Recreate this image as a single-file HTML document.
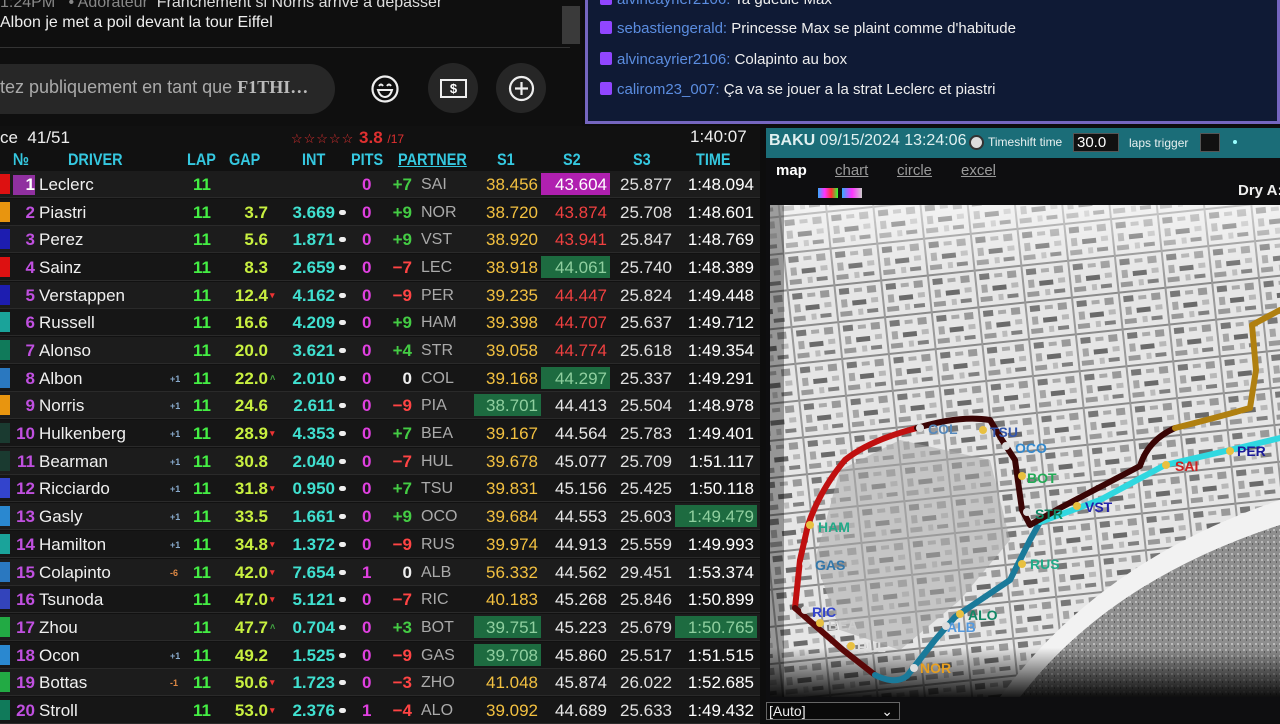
<!DOCTYPE html>
<html><head><meta charset="utf-8"><style>
*{margin:0;padding:0;box-sizing:border-box}
body{width:1280px;height:720px;overflow:hidden;background:#0d0d0d;font-family:"Liberation Sans",sans-serif;position:relative;color:#fff}
.abs{position:absolute;white-space:nowrap}
#yt{left:0;top:0;width:582px;height:126px;background:#0f0f0f}
#tw{left:585px;top:0;width:695px;height:124px;background:#0f1a35;border:3px solid #7566c0;border-top:none}
.tl{font-size:15px;color:#eee;left:12px}
.tl .ic{display:inline-block;width:12px;height:13px;background:#9146ff;border-radius:2px;margin-right:5px;vertical-align:-1px}
.tl b{font-weight:normal;color:#5b8de0}
#tbl{left:0;top:126px;width:760px;height:594px;background:#111}
.row{position:absolute;left:0;width:760px;height:27px;font-size:17px;font-weight:bold}
.row>span{position:absolute;top:4px}
.hd{position:absolute;top:150px;font-size:17px;font-weight:bold;color:#35c8e0;transform:scaleX(.85);transform-origin:left}
#mp{left:766px;top:126px;width:514px;height:594px;background:#0e0e10}
</style></head><body>

<div id="yt" class="abs">
<div class="abs" style="left:0;top:-6px;font-size:16px;color:#ddd"><span style="color:#888">1:24PM &nbsp; • Adorateur</span> &nbsp;Franchement si Norris arrive a depasser</div>
<div class="abs" style="left:0;top:14px;font-size:16px;color:#eee">Albon je met a poil devant la tour Eiffel</div>
<div class="abs" style="left:562px;top:6px;width:18px;height:38px;background:#3a3a3a"></div>
<div class="abs" style="left:0;top:47px;width:570px;height:1px;background:#333"></div>
<div class="abs" style="left:-30px;top:64px;width:365px;height:50px;border-radius:25px;background:#272727"></div>
<div class="abs" style="left:0;top:77px;font-size:18px;color:#aaa">tez publiquement en tant que <span style="font-family:'Liberation Serif',serif;font-weight:bold;color:#bbb">F1THI…</span></div>
<svg class="abs" style="left:369px;top:73px" width="32" height="32" viewBox="0 0 32 32"><circle cx="16" cy="16" r="12.5" fill="none" stroke="#eee" stroke-width="2.2"/><path d="M10 13q2-3 4 0M18 13q2-3 4 0" fill="none" stroke="#eee" stroke-width="2"/><path d="M9 17h14q-2 7-7 7t-7-7z" fill="none" stroke="#eee" stroke-width="2"/></svg>
<div class="abs" style="left:428px;top:63px;width:50px;height:50px;border-radius:25px;background:#262626"></div>
<div class="abs" style="left:440px;top:79px;width:27px;height:19px;border:2.2px solid #eee;font-size:13px;font-weight:bold;text-align:center;line-height:15px">$</div>
<div class="abs" style="left:496px;top:63px;width:50px;height:50px;border-radius:25px;background:#262626"></div>
<svg class="abs" style="left:508px;top:75px" width="27" height="27" viewBox="0 0 27 27"><circle cx="13.5" cy="13.5" r="11.5" fill="none" stroke="#eee" stroke-width="2.2"/><path d="M13.5 7v13M7 13.5h13" stroke="#eee" stroke-width="2.2"/></svg>
</div>

<div id="tw" class="abs">
<div class="abs tl" style="top:-9px"><span class="ic"></span><b>alvincayrier2106:</b> Ta gueule Max</div>
<div class="abs tl" style="top:20px"><span class="ic"></span><b>sebastiengerald:</b> Princesse Max se plaint comme d'habitude</div>
<div class="abs tl" style="top:51px"><span class="ic"></span><b>alvincayrier2106:</b> Colapinto au box</div>
<div class="abs tl" style="top:81px"><span class="ic"></span><b>calirom23_007:</b> Ça va se jouer a la strat Leclerc et piastri</div>
</div>

<div id="tbl" class="abs"></div>
<div class="abs" style="left:0;top:128px;font-size:17px;color:#eee">ce &nbsp;41/51</div>
<div class="abs" style="left:291px;top:128px;font-size:17px;color:#e03030"><span style="font-size:13px;letter-spacing:1px">☆☆☆☆☆</span> <b>3.8</b> <span style="font-size:12px">/17</span></div>
<div class="abs" style="left:690px;top:127px;font-size:17px;color:#eee">1:40:07</div>
<div class="hd" style="left:13px">№</div>
<div class="hd" style="left:68px">DRIVER</div>
<div class="hd" style="left:187px">LAP</div>
<div class="hd" style="left:229px">GAP</div>
<div class="hd" style="left:302px">INT</div>
<div class="hd" style="left:351px">PITS</div>
<div class="hd" style="left:398px;text-decoration:underline">PARTNER</div>
<div class="hd" style="left:497px">S1</div>
<div class="hd" style="left:563px">S2</div>
<div class="hd" style="left:633px">S3</div>
<div class="hd" style="left:696px">TIME</div>

<div id="rows"></div>

<div id="mp" class="abs">
<div class="abs" style="left:0;top:2px;width:514px;height:30px;background:#1b6d78"></div>
<div class="abs" style="left:3px;top:6px;font-size:16px;color:#e0f0f0"><b>BAKU</b> 09/15/2024 13:24:06</div>
<div class="abs" style="left:203px;top:9px;width:15px;height:15px;border-radius:8px;background:#ddd;border:2px solid #333"></div>
<div class="abs" style="left:222px;top:9px;font-size:12px;color:#e8f0f0">Timeshift time</div>
<div class="abs" style="left:307px;top:7px;width:46px;height:19px;background:#111;border:1px solid #555;font-size:15px;color:#fff;padding-left:3px;line-height:17px">30.0</div>
<div class="abs" style="left:363px;top:10px;font-size:12px;color:#e8f0f0">laps trigger</div>
<div class="abs" style="left:434px;top:7px;width:20px;height:19px;background:#111;border:1px solid #555"></div>
<div class="abs" style="left:467px;top:14px;width:4px;height:4px;border-radius:2px;background:#9ff"></div>
<div class="abs" style="left:10px;top:36px;font-size:15px;font-weight:bold;color:#fff">map</div>
<div class="abs" style="left:69px;top:36px;font-size:15px;color:#999;text-decoration:underline">chart</div>
<div class="abs" style="left:131px;top:36px;font-size:15px;color:#999;text-decoration:underline">circle</div>
<div class="abs" style="left:195px;top:36px;font-size:15px;color:#999;text-decoration:underline">excel</div>
<div class="abs" style="left:52px;top:62px;width:20px;height:10px;background:linear-gradient(90deg,#3af,#f3f,#f33,#3f3)"></div>
<div class="abs" style="left:76px;top:62px;width:20px;height:10px;background:linear-gradient(90deg,#3af,#f3f,#ccc)"></div>
<div class="abs" style="left:472px;top:56px;font-size:15px;font-weight:bold;color:#eee">Dry A:</div>
<svg class="abs" style="left:4px;top:79px" width="510" height="492" viewBox="770 205 510 492">
<defs>
<pattern id="bl" width="47" height="37" patternUnits="userSpaceOnUse" patternTransform="rotate(-6)">
<rect width="47" height="37" fill="#e6e6e6"/>
<rect x="0" y="0" width="47" height="2" fill="#8a8a8a"/><rect x="0" y="0" width="2" height="37" fill="#9a9a9a"/>
<rect x="5" y="5" width="10" height="6" fill="#777"/><rect x="20" y="6" width="8" height="4" fill="#aaa"/><rect x="33" y="5" width="9" height="7" fill="#999"/>
<rect x="6" y="16" width="6" height="8" fill="#a5a5a5"/><rect x="17" y="18" width="14" height="5" fill="#6a6a6a"/><rect x="36" y="17" width="7" height="5" fill="#b8b8b8"/>
<rect x="4" y="28" width="12" height="5" fill="#999"/><rect x="22" y="27" width="5" height="6" fill="#bbb"/><rect x="31" y="28" width="11" height="4" fill="#808080"/></pattern>
<pattern id="sea" width="6" height="6" patternUnits="userSpaceOnUse"><rect width="6" height="6" fill="#8e8e8e"/><rect x="1" y="1" width="2" height="2" fill="#bbb"/><rect x="4" y="3" width="1" height="2" fill="#5e5e5e"/></pattern>
<linearGradient id="fd" x1="0" y1="0" x2="0" y2="1"><stop offset="0" stop-color="#fff" stop-opacity=".5"/><stop offset=".15" stop-color="#fff" stop-opacity="0"/><stop offset=".9" stop-color="#000" stop-opacity="0"/><stop offset="1" stop-color="#000" stop-opacity=".9"/></linearGradient>
</defs>
<rect x="770" y="205" width="510" height="492" fill="url(#bl)"/>
<path d="M840 470 L900 440 L990 460 L1010 540 L960 600 L900 650 L840 630 L815 560Z" fill="#aaa" opacity=".55"/>
<path d="M1000 697 Q1100 560 1280 500 L1280 697Z" fill="#f2f2f2"/>
<path d="M1020 697 Q1110 580 1280 525 L1280 697Z" fill="url(#sea)"/>
<rect x="770" y="205" width="510" height="492" fill="url(#fd)"/>
<rect x="770" y="205" width="14" height="492" fill="#000" opacity=".35"/>
<g fill="none" stroke-linecap="round" stroke-linejoin="round" stroke-width="6">
<path d="M917 428 Q870 440 845 460 Q820 490 808 525 L800 560 L795 608" stroke="#c01010"/>
<path d="M795 608 L843 650 L875 675" stroke="#5a0808"/>
<path d="M875 675 Q895 685 907 676 L935 640 L955 617 L1010 580 L1030 540 L1040 522" stroke="#1a7a9a"/>
<path d="M1040 522 L1100 500 L1165 465 L1230 450 L1280 438" stroke="#30d8e0"/>
<path d="M917 428 Q960 415 990 420 L1002 440 L1015 460 L1022 510 L1030 525 L1060 508 L1140 466 Q1148 440 1175 428" stroke="#3a0505"/>
<path d="M1175 428 Q1215 418 1250 408 L1256 370 L1252 325 L1280 310" stroke="#b08010"/>
</g>
<g font-size="14" font-weight="bold" font-family="Liberation Sans,sans-serif">
<text x="928" y="434" fill="#5588bb">COL</text><text x="990" y="437" fill="#3355aa">TSU</text><text x="1015" y="453" fill="#3388cc">OCO</text>
<text x="1027" y="483" fill="#22aa55">BOT</text><text x="1035" y="519" fill="#118866">STR</text><text x="1085" y="512" fill="#2222aa">VST</text>
<text x="1175" y="471" fill="#cc2222">SAI</text><text x="1237" y="456" fill="#1a1a99">PER</text><text x="818" y="532" fill="#22aa88">HAM</text>
<text x="815" y="570" fill="#3377aa">GAS</text><text x="1030" y="569" fill="#22aa88">RUS</text><text x="812" y="617" fill="#3344cc">RIC</text>
<text x="828" y="630" fill="#ccc">BEA</text><text x="857" y="652" fill="#ddd">HUL</text><text x="968" y="620" fill="#118866">ALO</text>
<text x="947" y="632" fill="#5599dd">ALB</text><text x="920" y="673" fill="#e8a020">NOR</text>
</g>
<g fill="#e8c040"><circle cx="983" cy="430" r="4"/><circle cx="1022" cy="476" r="4"/><circle cx="1077" cy="506" r="4"/><circle cx="1166" cy="465" r="4"/><circle cx="1230" cy="451" r="4"/><circle cx="810" cy="525" r="4"/><circle cx="1022" cy="564" r="4"/><circle cx="960" cy="614" r="4"/><circle cx="820" cy="623" r="4"/><circle cx="851" cy="646" r="4"/></g>
<g fill="#ddd"><circle cx="920" cy="428" r="4"/><circle cx="1006" cy="446" r="4"/><circle cx="1027" cy="512" r="4"/><circle cx="806" cy="564" r="4"/><circle cx="805" cy="610" r="4"/><circle cx="946" cy="626" r="4"/><circle cx="914" cy="668" r="4"/></g>
</svg>
<div class="abs" style="left:0;top:576px;width:134px;height:18px;background:#0a0a0a;border:1px solid #666;font-size:14px;color:#eee;padding-left:2px;line-height:16px">[Auto]<span style="position:absolute;right:6px;top:0">⌄</span></div>
</div>

<script>
var R=[
["#d11","Leclerc","","","",0,"+7","SAI","38.456","43.604","p","25.877","1:48.094",""],
["#e8950f","Piastri","","3.7","3.669",0,"+9","NOR","38.720","43.874","r","25.708","1:48.601",""],
["#1d1db0","Perez","","5.6","1.871",0,"+9","VST","38.920","43.941","r","25.847","1:48.769",""],
["#d11","Sainz","","8.3","2.659",0,"−7","LEC","38.918","44.061","g","25.740","1:48.389",""],
["#1d1db0","Verstappen","","12.4","4.162",0,"−9","PER","39.235","44.447","r","25.824","1:49.448","v"],
["#1aa39a","Russell","","16.6","4.209",0,"+9","HAM","39.398","44.707","r","25.637","1:49.712",""],
["#107a5a","Alonso","","20.0","3.621",0,"+4","STR","39.058","44.774","r","25.618","1:49.354",""],
["#2a78c0","Albon","+1","22.0","2.010",0,"0","COL","39.168","44.297","g","25.337","1:49.291","^"],
["#e8950f","Norris","+1","24.6","2.611",0,"−9","PIA","38.701g","44.413","","25.504","1:48.978",""],
["#1a3a30","Hulkenberg","+1","28.9","4.353",0,"+7","BEA","39.167","44.564","","25.783","1:49.401","v"],
["#1a3a30","Bearman","+1","30.8","2.040",0,"−7","HUL","39.678","45.077","","25.709","1:51.117",""],
["#3344cc","Ricciardo","+1","31.8","0.950",0,"+7","TSU","39.831","45.156","","25.425","1:50.118","v"],
["#2a88d0","Gasly","+1","33.5","1.661",0,"+9","OCO","39.684","44.553","","25.603","1:49.479g","" ],
["#1aa39a","Hamilton","+1","34.8","1.372",0,"−9","RUS","39.974","44.913","","25.559","1:49.993","v"],
["#2a78c0","Colapinto","-6","42.0","7.654",1,"0","ALB","56.332","44.562","","29.451","1:53.374","v"],
["#3344bb","Tsunoda","","47.0","5.121",0,"−7","RIC","40.183","45.268","","25.846","1:50.899","v"],
["#22aa44","Zhou","","47.7","0.704",0,"+3","BOT","39.751g","45.223","","25.679","1:50.765g","^"],
["#2a88d0","Ocon","+1","49.2","1.525",0,"−9","GAS","39.708g","45.860","","25.517","1:51.515",""],
["#22aa44","Bottas","-1","50.6","1.723",0,"−3","ZHO","41.048","45.874","","26.022","1:52.685","v"],
["#107a5a","Stroll","","53.0","2.376",1,"−4","ALO","39.092","44.689","","25.633","1:49.432","v"]];
var h="";
R.forEach(function(r,i){
 var y=171+i*27.68;
 var bg=i%2?"#161616":"#1c1c1c";
 function box(v,l,w,col,key){var g=v.slice(-1)=="g";if(g)v=v.slice(0,-1);
  var s=g?"background:#1d6b40;color:#8fcf9f;":"";
  if(key=="p")s="background:#b020b0;color:#fff;";
  if(key=="g")s="background:#1d6b40;color:#8fcf9f;";
  return '<span style="left:'+l+'px;width:'+w+'px;top:2px;height:22px;padding-top:2px;text-align:right;padding-right:3px;font-weight:normal;font-size:17px;color:'+col+';'+s+'">'+v+'</span>';}
 var sc=r[6][0]=="+"?"#4c4":(r[6][0]=="−"?"#f44":"#eee");
 var s2c=r[10]=="r"?"#f04040":"#e8e8e8";
 h+='<div class="row" style="top:'+y+'px;background:'+bg+';border-bottom:1px solid #2a2a2a">'+
 '<span style="left:0;top:3px;width:10px;height:20px;background:'+r[0]+'"></span>'+
 (i==0?'<span style="left:13px;top:4px;width:22px;height:20px;background:#9030a0"></span>':'')+
 '<span style="right:'+(760-35)+'px;color:'+(i==0?'#fff':'#c050e0')+'">'+(i+1)+'</span>'+
 '<span style="left:39px;color:#f0f0f0;font-weight:normal">'+r[1]+'</span>'+
 '<span style="left:170px;top:9px;font-size:9px;color:'+(r[2][0]=="-"?"#d84":"#8ac")+'">'+r[2]+'</span>'+
 '<span style="left:193px;color:#4e4">11</span>'+
 '<span style="right:'+(760-268)+'px;color:#c8f040">'+r[3]+'</span>'+
 (r[13]?'<span style="left:270px;top:8px;font-size:9px;color:'+(r[13]=="v"?"#e33":"#4a4")+'">'+(r[13]=="v"?"▾":"˄")+'</span>':'')+
 '<span style="right:'+(760-335)+'px;color:#40e0d0">'+r[4]+'</span>'+
 (r[4]?'<span style="left:339px;top:11px;width:7px;height:5px;border-radius:3px;background:#eee"></span>':'')+
 '<span style="left:362px;color:#e040e0">'+r[5]+'</span>'+
 '<span style="right:'+(760-412)+'px;color:'+sc+'">'+r[6]+'</span>'+
 '<span style="left:421px;color:#aaa;font-weight:normal;font-size:16px;top:5px">'+r[7]+'</span>'+
 box(r[8],474,67,"#f2c040","")+box(r[9],541,69,s2c,r[10])+box(r[11],612,63,"#e0e0e0","")+box(r[12],675,82,"#fff","")+
 '</div>';
});
document.getElementById("rows").innerHTML=h;
</script>
</body></html>
